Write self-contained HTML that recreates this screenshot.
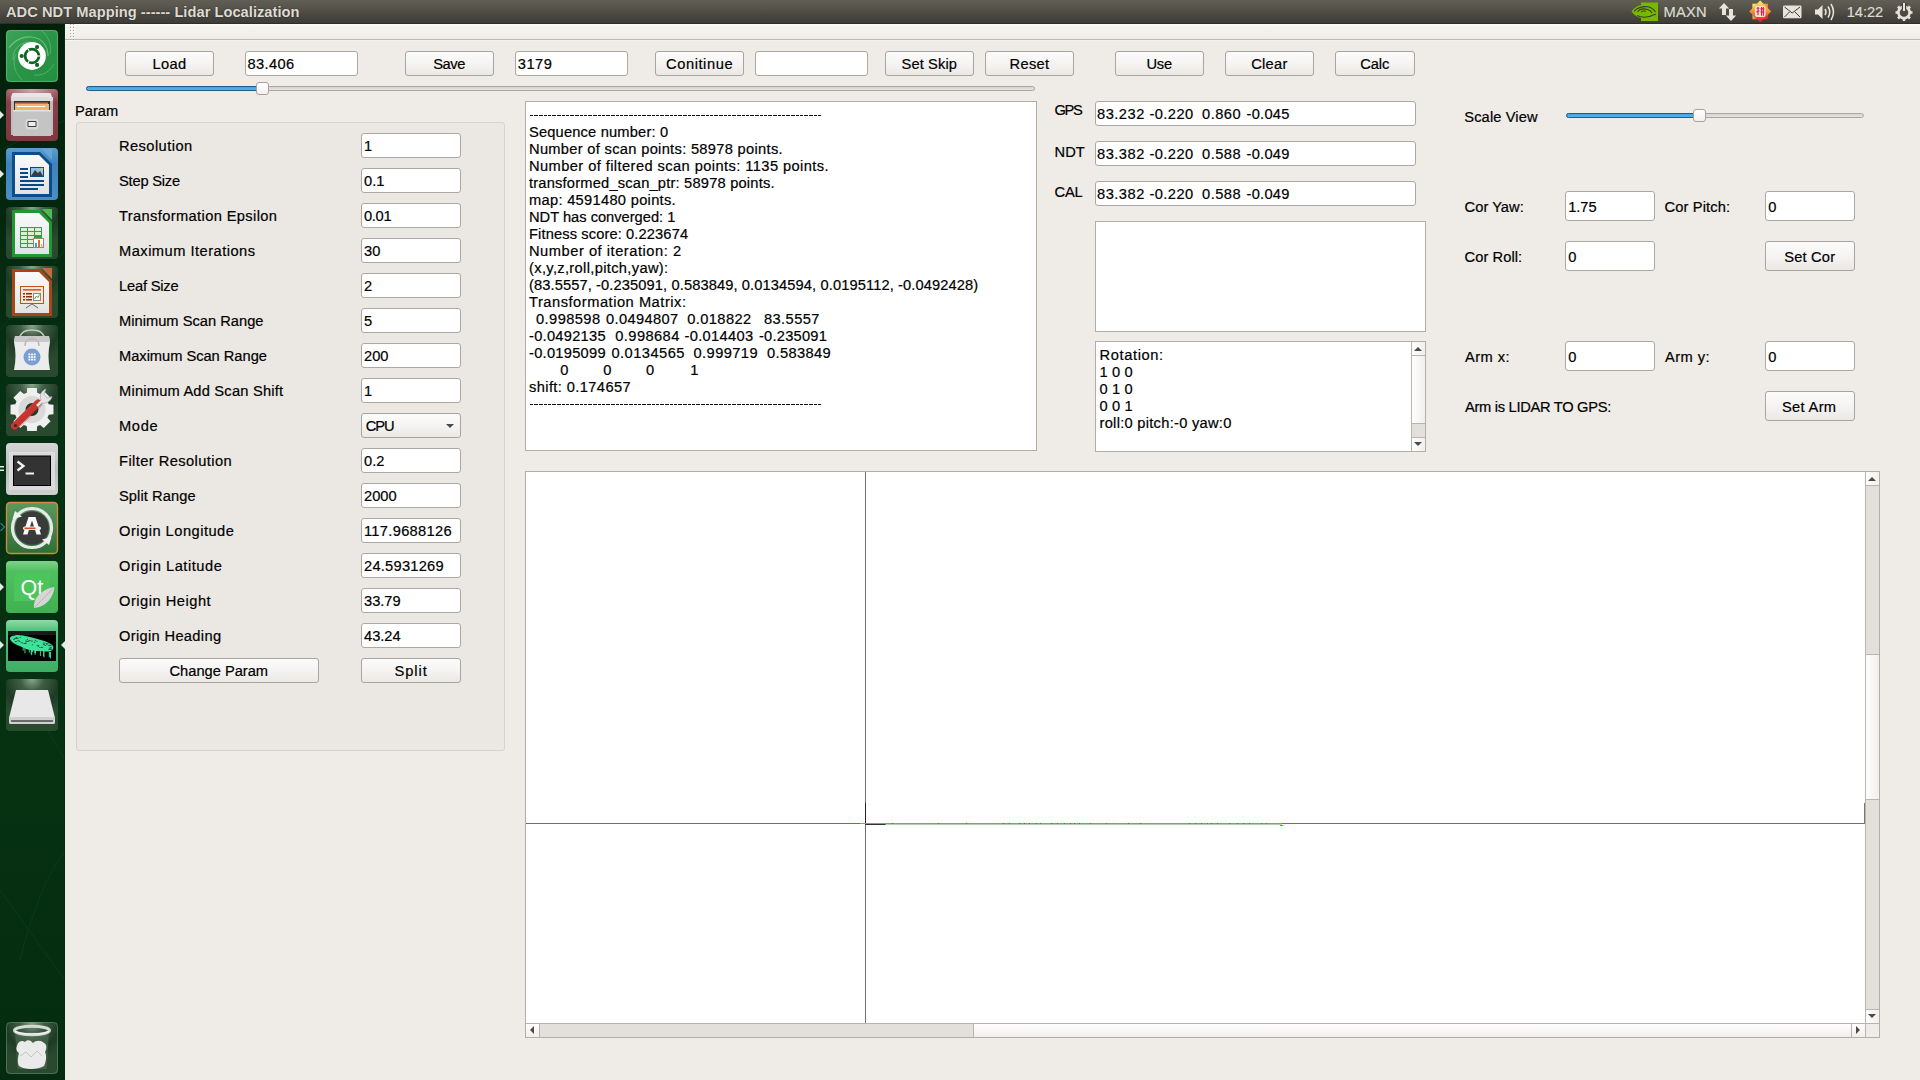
<!DOCTYPE html>
<html><head><meta charset="utf-8">
<style>
*{box-sizing:border-box}
html,body{margin:0;padding:0;width:1920px;height:1080px;overflow:hidden;background:#efebe7;font-family:"Liberation Sans",sans-serif;font-size:14.67px;color:#000}
.a{position:absolute}
.t{position:absolute;white-space:pre;line-height:17px;-webkit-text-stroke:0.2px currentColor}
.btn{position:absolute;height:26px;border:1px solid #a8a49f;border-radius:3px;background:linear-gradient(#fcfbfb,#f6f5f4 45%,#ebe8e4)}
.inp{position:absolute;height:26px;border:1px solid #aca8a3;border-radius:3px;background:#fff}
.frame{position:absolute;border:1px solid #b1ada8;background:#fff}
.sb{position:absolute;background:#e3e0dc}
.sbb{position:absolute;background:linear-gradient(90deg,#fefefe,#f1efec)}
.sbh{position:absolute;background:linear-gradient(#fefefe,#f1efec)}
.ln{position:absolute;background:#b8b4af}
.tri{position:absolute;width:0;height:0}
</style></head><body>

<!-- title / panel -->
<div class="a" style="left:0;top:0;width:1920px;height:24px;background:linear-gradient(#615f55,#57554c 30%,#48463f 65%,#3d3c37 95%,#302e2a 95.9%)"></div>
<svg class="a" style="left:1625px;top:0" width="295" height="24" viewBox="1625 0 295 24">
<!-- nvidia -->
<rect x="1641" y="2.5" width="17" height="18.5" fill="#76b900"/>
<path d="M1631.6 11.5 C1635 6 1641 4 1647 4.5 V19 C1640 19 1634.5 16 1631.6 11.5 Z" fill="#76b900"/>
<path d="M1634 11.5 C1637 7.5 1643 6 1648 6.8 C1651.5 7.5 1654 9.5 1655.5 12" stroke="#3c3b37" stroke-width="1.1" fill="none"/>
<path d="M1637.5 12 C1639.5 9 1644 8.5 1647.5 9.5 C1650 10.3 1651.5 11.5 1652 13" stroke="#3c3b37" stroke-width="1.1" fill="none"/>
<path d="M1641 12.2 C1642 10.8 1644.5 10.6 1646 11.4" stroke="#3c3b37" stroke-width="1" fill="none"/>
<path d="M1637 15.5 C1642 18 1649 17.5 1656 14" stroke="#3c3b37" stroke-width="1.1" fill="none"/>
<!-- arrows -->
<path d="M1724 3 L1718.8 8.5 H1722 V15 H1726 V8.5 H1729.2 Z" fill="#e8e4dc"/>
<path d="M1731 21 L1736.2 15.5 H1733 V9 H1729 V15.5 H1725.8 Z" fill="#e8e4dc"/>
<!-- input method -->
<defs><linearGradient id="imG" x1="0" y1="0" x2="1" y2="1"><stop offset="0" stop-color="#fff070"/><stop offset="0.45" stop-color="#f39a3a"/><stop offset="1" stop-color="#e0102a"/></linearGradient></defs>
<g transform="translate(1760.2 11.5)">
 <rect x="-7.8" y="-7.8" width="15.6" height="15.6" fill="url(#imG)"/>
 <rect x="-7.8" y="-7.8" width="15.6" height="15.6" fill="url(#imG)" transform="rotate(45)"/>
 <rect x="-5.3" y="-5.6" width="10.6" height="11" rx="2" fill="#f2e2e2"/>
 <g stroke="#e01a3a" stroke-width="1.1" fill="none">
  <path d="M-3.6 -3.2 H-0.8 M-2.2 -4.5 V3.8 M-3.8 0.6 L-0.8 -0.8"/>
  <path d="M0.2 -2.6 H4.2 M0.2 0.5 H4.2 M1.4 -4.4 V4.2 M3.2 -4.4 V4.2"/>
 </g>
</g>
<!-- mail -->
<rect x="1783" y="5.6" width="18.5" height="12.7" rx="1.2" fill="#e8e4dc"/>
<path d="M1784.5 7 L1792.2 13 L1800 7 M1784.5 17 L1789.5 12 M1800 17 L1795 12" stroke="#3c3b37" stroke-width="1" fill="none"/>
<!-- volume -->
<path d="M1815 9.5 H1818 L1822.5 5 V19 L1818 14.5 H1815 Z" fill="#e8e4dc"/>
<path d="M1825 9 Q1827 12 1825 15" stroke="#e8e4dc" stroke-width="1.5" fill="none"/>
<path d="M1828 6.5 Q1831.5 12 1828 17.5" stroke="#e8e4dc" stroke-width="1.5" fill="none"/>
<path d="M1831 4 Q1836 12 1831 20" stroke="#e8e4dc" stroke-width="1.5" fill="none"/>
<!-- gear/power -->
<g transform="translate(1904 12.5)">
 <circle r="5.6" fill="none" stroke="#e8e4dc" stroke-width="2.6"/>
 <g fill="#e8e4dc"><rect x="-1.3" y="-8.5" width="2.6" height="3"/><rect x="-1.3" y="5.5" width="2.6" height="3"/><rect x="-8.5" y="-1.3" width="3" height="2.6"/><rect x="5.5" y="-1.3" width="3" height="2.6"/>
 <rect x="-1.3" y="-8.5" width="2.6" height="3" transform="rotate(45)"/><rect x="-1.3" y="5.5" width="2.6" height="3" transform="rotate(45)"/><rect x="-8.5" y="-1.3" width="3" height="2.6" transform="rotate(45)"/><rect x="5.5" y="-1.3" width="3" height="2.6" transform="rotate(45)"/></g>
 <rect x="-2.2" y="-9.5" width="4.4" height="6" fill="#3f3e3a"/>
 <rect x="-1" y="-9.5" width="2" height="8" fill="#e8e4dc"/>
</g>
</svg>


<!-- launcher -->
<svg class="a" style="left:0;top:24px" width="65" height="1056" viewBox="0 24 65 1056">
<defs>
 <radialGradient id="hiTop" cx="0.5" cy="0" r="0.5"><stop offset="0" stop-color="#ffffff" stop-opacity="0.45"/><stop offset="1" stop-color="#ffffff" stop-opacity="0"/></radialGradient>
 <linearGradient id="lbg" x1="0" y1="0" x2="0" y2="1"><stop offset="0" stop-color="#02200a"/><stop offset="0.35" stop-color="#052f12"/><stop offset="0.7" stop-color="#063212"/><stop offset="1" stop-color="#042b0f"/></linearGradient>
 <linearGradient id="gDash" x1="0" y1="0" x2="1" y2="1"><stop offset="0" stop-color="#3da458"/><stop offset="0.5" stop-color="#2a9447"/><stop offset="1" stop-color="#239040"/></linearGradient>
 <linearGradient id="gFiles" x1="0" y1="0" x2="0" y2="1"><stop offset="0" stop-color="#a8646c"/><stop offset="0.25" stop-color="#8d3f48"/><stop offset="1" stop-color="#7e3740"/></linearGradient>
 <linearGradient id="gWriter" x1="0" y1="0" x2="0" y2="1"><stop offset="0" stop-color="#5a9fd0"/><stop offset="0.3" stop-color="#3f83bd"/><stop offset="1" stop-color="#4a8ec6"/></linearGradient>
 <radialGradient id="gDark" cx="0.5" cy="0" r="0.75"><stop offset="0" stop-color="#8aa88f"/><stop offset="0.3" stop-color="#3f5e45"/><stop offset="0.7" stop-color="#1d3b24"/><stop offset="1" stop-color="#2a4a30"/></radialGradient>
 <linearGradient id="gTerm" x1="0" y1="0" x2="0" y2="1"><stop offset="0" stop-color="#d6d6d6"/><stop offset="0.5" stop-color="#bdbdbd"/><stop offset="1" stop-color="#cfcfcf"/></linearGradient>
 <linearGradient id="gUpd" x1="0" y1="0" x2="0" y2="1"><stop offset="0" stop-color="#5a9a5e"/><stop offset="1" stop-color="#2f6e37"/></linearGradient>
 <linearGradient id="gQt" x1="0" y1="0" x2="0" y2="1"><stop offset="0" stop-color="#7ed38a"/><stop offset="0.2" stop-color="#4fbf5f"/><stop offset="1" stop-color="#40b152"/></linearGradient>
 <linearGradient id="gLid" x1="0" y1="0" x2="0" y2="1"><stop offset="0" stop-color="#8fdcaa"/><stop offset="0.2" stop-color="#52c27c"/><stop offset="1" stop-color="#3eae64"/></linearGradient>
 <linearGradient id="gPaper" x1="0" y1="0" x2="0" y2="1"><stop offset="0" stop-color="#fafafa"/><stop offset="1" stop-color="#e2e2e2"/></linearGradient>
</defs>
<rect x="0" y="24" width="65" height="1056" fill="url(#lbg)"/>
<g stroke="#12501f" stroke-width="1" fill="none" opacity="0.4">
 <path d="M0 330 L65 250"/><path d="M0 890 L65 980"/><path d="M20 960 C40 880 60 860 65 850"/><path d="M0 560 L65 520"/><path d="M0 150 L65 120"/><path d="M30 700 L65 760"/>
</g>
<rect x="64" y="24" width="1" height="1056" fill="#022a0b"/>

<!-- 1 dash -->
<rect x="6" y="30" width="52" height="52" rx="4" fill="url(#gDash)"/>
<rect x="6.5" y="30.5" width="51" height="51" rx="4" fill="none" stroke="#7cc890" stroke-width="1" opacity="0.5"/>
<path d="M9 48 C14 40 24 36 32 37 C42 38 48 46 48 56" fill="none" stroke="#b8e6c2" stroke-width="1.2" opacity="0.45"/>
<path d="M13 60 C12 48 22 42 30 42" fill="none" stroke="#b8e6c2" stroke-width="1" opacity="0.35"/>
<path d="M22 80 C14 72 12 62 16 54" fill="none" stroke="#b8e6c2" stroke-width="1" opacity="0.3"/>
<path d="M54 64 C50 72 42 76 34 75" fill="none" stroke="#b8e6c2" stroke-width="1" opacity="0.3"/>
<path d="M42 31 C50 38 52 48 50 54" fill="none" stroke="#b8e6c2" stroke-width="1" opacity="0.3"/>
<circle cx="32.3" cy="56.6" r="14" fill="#3a6a45" opacity="0.35"/>
<circle cx="32" cy="56" r="13.9" fill="#fff"/>
<circle cx="32" cy="56" r="6.9" fill="none" stroke="#0f6424" stroke-width="2.8"/>
<g stroke="#fff" stroke-width="1.1"><path d="M37 56 L40 56"/><path d="M29.5 51.7 L28 49.1"/><path d="M29.5 60.3 L28 62.9"/></g>
<circle cx="21.7" cy="56" r="2.1" fill="#0f6424"/>
<circle cx="37.1" cy="47.1" r="2.1" fill="#0f6424"/>
<circle cx="37.1" cy="64.9" r="2.1" fill="#0f6424"/>

<!-- 2 files -->
<rect x="6" y="89" width="52" height="52" rx="4" fill="url(#gFiles)"/>
<rect x="6" y="89" width="52" height="52" rx="4" fill="url(#hiTop)"/>
<rect x="11" y="97" width="42" height="38" fill="#bdbdbd"/>
<path d="M12.5 93 H50.5 L52 97 H11 Z" fill="#e6e6e6"/>
<rect x="11" y="97" width="42" height="4" fill="#dcdcdc"/>
<rect x="14" y="101" width="36" height="9" fill="#2e3236"/>
<rect x="15" y="102.5" width="33" height="3" fill="#e0703a"/>
<rect x="15" y="104" width="34" height="6" fill="#f3b465"/>
<rect x="17" y="106" width="28" height="1" fill="#fff"/>
<rect x="13" y="110" width="38" height="26" fill="#c4c4c4"/>
<rect x="13" y="110" width="38" height="1.5" fill="#e2e2e2"/>
<rect x="25.5" y="119" width="13" height="10.5" rx="2" fill="#d8d8d8"/>
<rect x="27.5" y="121" width="9" height="6" rx="1" fill="#3a3a3a"/>
<rect x="28.5" y="122" width="7" height="4" fill="#efefef"/>

<!-- 3 writer -->
<rect x="6" y="148" width="52" height="52" rx="4" fill="url(#gWriter)"/>
<path d="M12 152 H40 L52 164 V197 H12 Z" fill="#0d4e8a"/>
<path d="M15 155 H39 L49 165 V194 H15 Z" fill="url(#gPaper)"/>
<path d="M42 149 H52 V160 Z" fill="#6aa5d6"/>
<g fill="#0b4886"><rect x="20" y="168" width="8" height="2"/><rect x="20" y="172" width="8" height="2"/><rect x="20" y="176" width="8" height="2"/><rect x="20" y="180" width="24" height="2"/><rect x="20" y="184" width="24" height="2"/><rect x="20" y="188" width="18" height="2"/></g>
<rect x="30" y="167" width="14" height="10" fill="#0b4886"/>
<rect x="31" y="168" width="12" height="8" fill="#8fc3ea"/>
<path d="M31 176 L35 170 L38 173 L40 171 L43 176 Z" fill="#3b3b3b"/>
<circle cx="42" cy="169" r="1.3" fill="#e8c84a"/>

<!-- 4 calc -->
<rect x="6" y="207" width="52" height="52" rx="4" fill="url(#gDark)"/>
<path d="M12 210 H40 L52 222 V257 H12 Z" fill="#21982e"/>
<path d="M15 213 H39 L49 223 V254 H15 Z" fill="url(#gPaper)"/>
<path d="M42 209 H52 V220 Z" fill="#4cbb54"/>
<rect x="20" y="227" width="22" height="21" fill="#2ea33a"/>
<g fill="#d9f2d2"><rect x="21" y="228" width="6" height="3"/><rect x="28" y="228" width="6" height="3"/><rect x="35" y="228" width="6" height="3"/><rect x="21" y="232" width="6" height="3"/><rect x="28" y="232" width="6" height="3"/><rect x="35" y="232" width="6" height="3"/><rect x="21" y="236" width="6" height="3"/><rect x="28" y="236" width="6" height="3"/><rect x="21" y="240" width="6" height="3"/><rect x="28" y="240" width="6" height="3"/><rect x="21" y="244" width="6" height="3"/><rect x="28" y="244" width="6" height="3"/></g>
<rect x="33" y="238" width="11" height="10" fill="#8a8a8a"/>
<rect x="34" y="239" width="9" height="8" fill="#fff"/>
<rect x="35" y="243" width="2" height="4" fill="#3aa0e0"/><rect x="38" y="240" width="2" height="7" fill="#e06a2a"/><rect x="41" y="244" width="1.5" height="3" fill="#f0c030"/>

<!-- 5 impress -->
<rect x="6" y="266" width="52" height="52" rx="4" fill="url(#gDark)"/>
<path d="M12 269 H40 L52 281 V316 H12 Z" fill="#a8461a"/>
<path d="M15 272 H39 L49 282 V313 H15 Z" fill="url(#gPaper)"/>
<path d="M42 268 H52 V279 Z" fill="#c56a3a"/>
<rect x="20" y="286" width="24" height="18" fill="#c4501e"/>
<rect x="21" y="287" width="22" height="16" fill="#fbe6da"/>
<rect x="23" y="289" width="18" height="1.6" fill="#d0602a"/>
<g fill="#8a2e0e"><rect x="23" y="293" width="2" height="1.5"/><rect x="26" y="293" width="6" height="1.5"/><rect x="23" y="296" width="2" height="1.5"/><rect x="26" y="296" width="6" height="1.5"/><rect x="23" y="299" width="2" height="1.5"/><rect x="26" y="299" width="6" height="1.5"/></g>
<rect x="33" y="293" width="8" height="8" fill="#888"/><rect x="34" y="294" width="6" height="6" fill="#fff"/>
<path d="M34.5 299 L36.5 296 L38 297.5 L39.5 294.5" stroke="#2aa82a" stroke-width="0.9" fill="none"/>
<path d="M26 308 L32 304 L38 308" stroke="#666" stroke-width="1" fill="none"/>

<!-- 6 software -->
<rect x="6" y="325" width="52" height="52" rx="4" fill="url(#gDark)"/>
<path d="M19 342 C19 332 25 330 32 330 C39 330 45 332 45 342" stroke="#c8c8c8" stroke-width="1.5" fill="none"/>
<path d="M15 336 H49 L50 342 C48 352 48 360 50 370 H14 C16 360 16 352 14 342 Z" fill="#ececec"/>
<path d="M15 336 H49 L50 342 H14 Z" fill="#c9c9c9"/>
<path d="M25 346 C25 340 28 339 32 339 C36 339 39 340 39 346" stroke="#b8b8b8" stroke-width="1.4" fill="none"/>
<circle cx="32" cy="357" r="8.5" fill="#7b9fd2"/>
<g fill="#fff"><rect x="28.5" y="353.5" width="1.8" height="1.8"/><rect x="31.1" y="353.5" width="1.8" height="1.8"/><rect x="33.7" y="353.5" width="1.8" height="1.8"/><rect x="28.5" y="356.1" width="1.8" height="1.8"/><rect x="31.1" y="356.1" width="1.8" height="1.8"/><rect x="33.7" y="356.1" width="1.8" height="1.8"/><rect x="28.5" y="358.7" width="1.8" height="1.8"/><rect x="31.1" y="358.7" width="1.8" height="1.8"/><rect x="33.7" y="358.7" width="1.8" height="1.8"/></g>

<!-- 7 settings -->
<rect x="6" y="384" width="52" height="52" rx="4" fill="url(#gDark)"/>
<path d="M48.72 404.33 L53.47 404.70 L53.47 414.30 L48.72 414.67 L47.48 417.66 L50.58 421.29 L43.79 428.08 L40.16 424.98 L37.17 426.22 L36.80 430.97 L27.20 430.97 L26.83 426.22 L23.84 424.98 L20.21 428.08 L13.42 421.29 L16.52 417.66 L15.28 414.67 L10.53 414.30 L10.53 404.70 L15.28 404.33 L16.52 401.34 L13.42 397.71 L20.21 390.92 L23.84 394.02 L26.83 392.78 L27.20 388.03 L36.80 388.03 L37.17 392.78 L40.16 394.02 L43.79 390.92 L50.58 397.71 L47.48 401.34 Z" fill="#efefef"/>
<circle cx="32" cy="409.5" r="13.5" fill="#d9d9d9"/>
<circle cx="32" cy="409.5" r="6.5" fill="#1f3a26"/>
<path d="M14.5 426 L38 403" stroke="#d23a32" stroke-width="7" stroke-linecap="round"/>
<path d="M14.5 426 L38 403" stroke="#a82620" stroke-width="7" stroke-linecap="round" opacity="0.25" transform="translate(1 1)"/>
<circle cx="15.5" cy="425.5" r="1.6" fill="#3a2a2a"/>
<path d="M36 405 L41 400 C39 395 42 390 46 389 L44 394 L47 398 L52 396.5 C51 401 47 404 42 403 L38 407 Z" fill="#e4e4e4" stroke="#9a9a9a" stroke-width="0.6"/>

<!-- 8 terminal -->
<rect x="6" y="443" width="52" height="52" rx="4" fill="url(#gTerm)"/>
<rect x="9.5" y="452.5" width="45" height="37.5" fill="#f2f2f2"/>
<rect x="10" y="453" width="44" height="37" fill="#b0b0b0" opacity="0.35"/>
<rect x="13" y="455.5" width="38" height="30.5" fill="#000"/>
<rect x="14" y="456.5" width="36" height="28.5" fill="#333"/>
<path d="M17.5 461.5 L23.5 466 L17.5 470.5" stroke="#f4f4f4" stroke-width="2.2" fill="none"/>
<rect x="25.5" y="472.5" width="8.5" height="2" fill="#f4f4f4"/>

<!-- 9 updater -->
<rect x="6" y="502" width="52" height="52" rx="4" fill="url(#gUpd)"/>
<rect x="6.5" y="502.5" width="51" height="51" rx="4" fill="none" stroke="#d9893c" stroke-width="1.3"/>
<circle cx="32" cy="528" r="19.5" fill="none" stroke="#e8e8e8" stroke-width="3.2"/>
<circle cx="32" cy="528" r="16.8" fill="#3a3a3a"/>
<path d="M12.5 519 L15 511 L22 516.5 Z" fill="#f0f0f0"/>
<path d="M51.5 537 L49 545 L42 539.5 Z" fill="#f0f0f0"/>
<path d="M23 534.5 L28.5 517 H35.5 L41 534.5 H36.5 L32 520.5 L27.5 534.5 Z" fill="#fafafa"/>
<rect x="23" y="526.5" width="18" height="3.6" rx="1.8" fill="#f4f4f4"/>
<rect x="24.5" y="527.5" width="11" height="1.6" fill="#e24a1c"/>

<!-- 10 qt -->
<rect x="6" y="561" width="52" height="52" rx="4" fill="url(#gQt)"/>
<path d="M18 573 H50 V601 H14 V577 Z" fill="#4cc65c"/>
<text x="20.5" y="595" font-family="Liberation Sans" font-size="21.5" fill="#fff">Qt</text>
<path d="M34 608 C33 598 42 589 54.5 587 C53 598 46 607 34 608 Z" fill="#d6d6d6"/>
<path d="M35 607 L53 588.5" stroke="#a0a0a0" stroke-width="0.6"/>

<!-- 11 lidar app -->
<rect x="6" y="620" width="52" height="52" rx="4" fill="url(#gLid)"/>
<rect x="8" y="631" width="48" height="30" fill="#000"/>
<rect x="8" y="631" width="48" height="4" fill="#333" opacity="0.5"/>
<path d="M10 638 C12 634 20 634.5 30 637 C40 639.5 50 642 53 646 C54.5 649.5 51 652 46 651.5 C38 651 30 651 24 648 C17 645 9.5 642 10 638 Z" fill="#3ee39a"/>
<g fill="#000" opacity="0.7">
<rect x="36.7" y="645.1" width="2.6" height="0.7"/>
<rect x="48.8" y="647.9" width="2.8" height="0.7"/>
<rect x="14.1" y="638.1" width="2.9" height="0.7"/>
<rect x="37.7" y="646.2" width="1.2" height="0.7"/>
<rect x="30.8" y="640.7" width="2.1" height="0.7"/>
<rect x="34.8" y="640.2" width="1.4" height="0.7"/>
<rect x="23.6" y="643.0" width="2.5" height="0.7"/>
<rect x="19.1" y="641.2" width="1.3" height="0.7"/>
<rect x="36.5" y="641.3" width="1.0" height="0.7"/>
<rect x="46.1" y="644.1" width="1.4" height="0.7"/>
<rect x="50.3" y="649.1" width="1.6" height="0.7"/>
<rect x="49.5" y="646.9" width="2.4" height="0.7"/>
<rect x="20.8" y="642.5" width="2.4" height="0.7"/>
<rect x="49.7" y="649.1" width="1.6" height="0.7"/>
<rect x="26.7" y="639.2" width="1.3" height="0.7"/>
<rect x="15.5" y="637.4" width="2.2" height="0.7"/>
<rect x="13.1" y="639.1" width="1.7" height="0.7"/>
<rect x="24.8" y="642.7" width="2.0" height="0.7"/>
<rect x="25.0" y="640.7" width="2.4" height="0.7"/>
<rect x="15.2" y="641.4" width="1.0" height="0.7"/>
<rect x="41.5" y="646.8" width="1.0" height="0.7"/>
<rect x="42.9" y="644.3" width="2.2" height="0.7"/>
<rect x="13.3" y="635.4" width="1.4" height="0.7"/>
<rect x="49.3" y="644.8" width="2.5" height="0.7"/>
<rect x="48.3" y="649.0" width="1.7" height="0.7"/>
<rect x="26.5" y="641.3" width="2.6" height="0.7"/>
<rect x="17.1" y="640.5" width="2.6" height="0.7"/>
<rect x="45.7" y="643.0" width="2.9" height="0.7"/>
<rect x="16.5" y="637.9" width="2.2" height="0.7"/>
<rect x="47.9" y="645.3" width="2.8" height="0.7"/>
<rect x="33.7" y="641.8" width="1.6" height="0.7"/>
<rect x="19.7" y="637.1" width="1.3" height="0.7"/>
<rect x="39.2" y="647.2" width="1.3" height="0.7"/>
<rect x="14.8" y="641.4" width="2.1" height="0.7"/>
<rect x="28.4" y="640.1" width="2.2" height="0.7"/>
<rect x="44.4" y="645.2" width="1.8" height="0.7"/>
<rect x="15.1" y="641.0" width="1.1" height="0.7"/>
<rect x="31.8" y="644.5" width="1.3" height="0.7"/>
<rect x="40.8" y="647.3" width="2.3" height="0.7"/>
<rect x="42.9" y="642.7" width="1.9" height="0.7"/>
</g>
<g fill="#3ee39a">
<rect x="24.5" y="646.9" width="0.9" height="6.4"/>
<rect x="28.8" y="647.8" width="0.9" height="4.8"/>
<rect x="50.0" y="652.0" width="0.9" height="6.4"/>
<rect x="49.3" y="651.9" width="0.9" height="4.8"/>
<rect x="34.6" y="648.9" width="0.9" height="5.9"/>
<rect x="34.4" y="648.9" width="0.9" height="4.2"/>
<rect x="32.1" y="648.4" width="0.9" height="3.6"/>
<rect x="31.3" y="648.3" width="0.9" height="7.0"/>
<rect x="48.8" y="651.8" width="0.9" height="5.5"/>
<rect x="35.0" y="649.0" width="0.9" height="4.4"/>
<rect x="22.7" y="646.5" width="0.9" height="4.1"/>
<rect x="43.5" y="650.7" width="0.9" height="6.5"/>
<rect x="30.8" y="648.2" width="0.9" height="6.1"/>
<rect x="43.2" y="650.6" width="0.9" height="5.8"/>
<rect x="39.9" y="650.0" width="0.9" height="6.0"/>
<rect x="30.9" y="648.2" width="0.9" height="5.8"/>
</g>

<!-- 12 drive -->
<rect x="6" y="679" width="52" height="52" rx="4" fill="url(#gDark)"/>
<path d="M16 690 H48 L55 718 H9 Z" fill="#e8e8e8"/>
<rect x="9" y="717" width="46" height="7" rx="1.5" fill="#cfcfcf"/>
<rect x="11" y="720" width="42" height="2" fill="#6a6a6a"/>

<!-- trash -->
<rect x="6" y="1022" width="52" height="52" rx="4" fill="url(#gDark)"/>
<rect x="6.5" y="1022.5" width="51" height="51" rx="4" fill="none" stroke="#7a9a80" stroke-width="1" opacity="0.45"/>
<path d="M15 1032 H49 L46.5 1069 H17.5 Z" fill="#6f8a74" opacity="0.35"/>
<path d="M17 1046 C18 1041 22 1040 25 1042 C27 1039 31 1040 33 1043 C36 1040 41 1040 44 1043 C47 1044 47 1049 45 1052 C47 1056 46 1062 44 1066 C38 1070 24 1070 19 1066 C17 1062 18 1057 19 1053 C16 1051 16 1048 17 1046 Z" fill="#eaeaea"/>
<path d="M20 1056 L26 1052 L31 1057 L37 1051 L42 1056" stroke="#c4c4c4" stroke-width="1" fill="none"/>
<ellipse cx="32" cy="1030.5" rx="17.5" ry="4.2" fill="none" stroke="#d8d8d8" stroke-width="3"/>
<path d="M15 1031 C20 1035 44 1035 49 1031" stroke="#f4f4f4" stroke-width="1.2" fill="none"/>

<!-- running indicators -->
<g fill="#e8e8e8">
 <path d="M0 111 L4 115 L0 119 Z"/>
 <path d="M0 170 L4 174 L0 178 Z"/>
 <path d="M0 466 H4 V467.5 H0 Z"/><path d="M0 469.5 H4 V471 H0 Z"/>
 <path d="M0 583 L4 587 L0 591 Z"/>
 <path d="M0 641 L4 645 L0 649 Z"/>
 <path d="M65 641 L61 645 L65 649 Z"/>
</g>
<path d="M0.5 523 L4.5 527 L0.5 531" fill="none" stroke="#4aa8e0" stroke-width="1"/>
</svg>


<!-- toolbar strip -->
<div class="a" style="left:65px;top:24px;width:1855px;height:16px;background:linear-gradient(#fdfcfa,#f6f4f0 15%,#f0ede9);border-bottom:1px solid #bdb9b3"></div>
<div class="a" style="left:65px;top:40px;width:1855px;height:1px;background:#f5f2ee"></div>
<svg class="a" style="left:69px;top:24px" width="8" height="18"><rect x="1" y="0" width="1" height="1" fill="#aaa6a0"/><rect x="2" y="1" width="1" height="1" fill="#fff"/><rect x="4" y="0" width="1" height="1" fill="#aaa6a0"/><rect x="5" y="1" width="1" height="1" fill="#fff"/><rect x="1" y="3" width="1" height="1" fill="#aaa6a0"/><rect x="2" y="4" width="1" height="1" fill="#fff"/><rect x="4" y="3" width="1" height="1" fill="#aaa6a0"/><rect x="5" y="4" width="1" height="1" fill="#fff"/><rect x="1" y="6" width="1" height="1" fill="#aaa6a0"/><rect x="2" y="7" width="1" height="1" fill="#fff"/><rect x="4" y="6" width="1" height="1" fill="#aaa6a0"/><rect x="5" y="7" width="1" height="1" fill="#fff"/><rect x="1" y="9" width="1" height="1" fill="#aaa6a0"/><rect x="2" y="10" width="1" height="1" fill="#fff"/><rect x="4" y="9" width="1" height="1" fill="#aaa6a0"/><rect x="5" y="10" width="1" height="1" fill="#fff"/><rect x="1" y="12" width="1" height="1" fill="#aaa6a0"/><rect x="2" y="13" width="1" height="1" fill="#fff"/><rect x="4" y="12" width="1" height="1" fill="#aaa6a0"/><rect x="5" y="13" width="1" height="1" fill="#fff"/><rect x="1" y="15" width="1" height="1" fill="#aaa6a0"/><rect x="2" y="16" width="1" height="1" fill="#fff"/><rect x="4" y="15" width="1" height="1" fill="#aaa6a0"/><rect x="5" y="16" width="1" height="1" fill="#fff"/></svg>

<!-- top button row -->
<div class="btn" style="left:125px;top:51px;width:89px;height:25px"></div>
<div class="inp" style="left:245px;top:51px;width:113px;height:25px"></div>
<div class="btn" style="left:405px;top:51px;width:89px;height:25px"></div>
<div class="inp" style="left:515px;top:51px;width:113px;height:25px"></div>
<div class="btn" style="left:655px;top:51px;width:89px;height:25px"></div>
<div class="inp" style="left:755px;top:51px;width:113px;height:25px"></div>
<div class="btn" style="left:885px;top:51px;width:89px;height:25px"></div>
<div class="btn" style="left:985px;top:51px;width:89px;height:25px"></div>
<div class="btn" style="left:1115px;top:51px;width:89px;height:25px"></div>
<div class="btn" style="left:1225px;top:51px;width:89px;height:25px"></div>
<div class="btn" style="left:1335px;top:51px;width:80px;height:25px"></div>

<!-- slider -->
<div class="a" style="left:86px;top:86px;width:949px;height:5px;border:1px solid #aaa6a1;border-radius:3px;background:linear-gradient(#d8d5d1,#e4e1de)"></div>
<div class="a" style="left:86px;top:86px;width:174px;height:5px;border:1px solid #1d5e8c;border-radius:3px 0 0 3px;background:linear-gradient(#47a2dc,#52b3f0)"></div>
<div class="a" style="left:256px;top:82px;width:13px;height:13px;border:1px solid #a6a29d;border-radius:3px;background:linear-gradient(#fff,#f3f1ef)"></div>

<!-- Param group -->
<div class="a" style="left:76px;top:122px;width:429px;height:629px;border:1px solid #d6d2cd;border-radius:3px;background:#ebe8e3"></div>
<div class="inp" style="left:361px;top:133px;width:100px;height:25px"></div>
<div class="inp" style="left:361px;top:168px;width:100px;height:25px"></div>
<div class="inp" style="left:361px;top:203px;width:100px;height:25px"></div>
<div class="inp" style="left:361px;top:238px;width:100px;height:25px"></div>
<div class="inp" style="left:361px;top:273px;width:100px;height:25px"></div>
<div class="inp" style="left:361px;top:308px;width:100px;height:25px"></div>
<div class="inp" style="left:361px;top:343px;width:100px;height:25px"></div>
<div class="inp" style="left:361px;top:378px;width:100px;height:25px"></div>
<div class="btn" style="left:361px;top:413px;width:100px;height:25px"></div>
<div class="tri" style="left:446px;top:424px;border-left:4px solid transparent;border-right:4px solid transparent;border-top:4px solid #4a4a4a"></div>
<div class="inp" style="left:361px;top:448px;width:100px;height:25px"></div>
<div class="inp" style="left:361px;top:483px;width:100px;height:25px"></div>
<div class="inp" style="left:361px;top:518px;width:100px;height:25px"></div>
<div class="inp" style="left:361px;top:553px;width:100px;height:25px"></div>
<div class="inp" style="left:361px;top:588px;width:100px;height:25px"></div>
<div class="inp" style="left:361px;top:623px;width:100px;height:25px"></div>
<div class="btn" style="left:119px;top:658px;width:200px;height:25px"></div>
<div class="btn" style="left:361px;top:658px;width:100px;height:25px"></div>

<!-- text log -->
<div class="frame" style="left:525px;top:101px;width:512px;height:350px"></div>
<svg class="a" style="left:530px;top:115px" width="295" height="1" fill="#111"><rect x="0" y="0" width="3" height="1"/><rect x="4" y="0" width="4" height="1"/><rect x="9" y="0" width="4" height="1"/><rect x="14" y="0" width="3" height="1"/><rect x="18" y="0" width="3" height="1"/><rect x="22" y="0" width="4" height="1"/><rect x="27" y="0" width="4" height="1"/><rect x="32" y="0" width="3" height="1"/><rect x="36" y="0" width="3" height="1"/><rect x="40" y="0" width="4" height="1"/><rect x="45" y="0" width="4" height="1"/><rect x="50" y="0" width="3" height="1"/><rect x="54" y="0" width="3" height="1"/><rect x="58" y="0" width="4" height="1"/><rect x="63" y="0" width="4" height="1"/><rect x="68" y="0" width="3" height="1"/><rect x="72" y="0" width="3" height="1"/><rect x="76" y="0" width="4" height="1"/><rect x="81" y="0" width="4" height="1"/><rect x="86" y="0" width="3" height="1"/><rect x="90" y="0" width="3" height="1"/><rect x="94" y="0" width="4" height="1"/><rect x="99" y="0" width="4" height="1"/><rect x="104" y="0" width="3" height="1"/><rect x="108" y="0" width="3" height="1"/><rect x="112" y="0" width="4" height="1"/><rect x="117" y="0" width="4" height="1"/><rect x="122" y="0" width="3" height="1"/><rect x="126" y="0" width="3" height="1"/><rect x="130" y="0" width="4" height="1"/><rect x="135" y="0" width="4" height="1"/><rect x="140" y="0" width="3" height="1"/><rect x="144" y="0" width="3" height="1"/><rect x="148" y="0" width="4" height="1"/><rect x="153" y="0" width="4" height="1"/><rect x="158" y="0" width="3" height="1"/><rect x="162" y="0" width="3" height="1"/><rect x="166" y="0" width="4" height="1"/><rect x="171" y="0" width="4" height="1"/><rect x="176" y="0" width="3" height="1"/><rect x="180" y="0" width="3" height="1"/><rect x="184" y="0" width="4" height="1"/><rect x="189" y="0" width="4" height="1"/><rect x="194" y="0" width="3" height="1"/><rect x="198" y="0" width="3" height="1"/><rect x="202" y="0" width="4" height="1"/><rect x="207" y="0" width="4" height="1"/><rect x="212" y="0" width="3" height="1"/><rect x="216" y="0" width="3" height="1"/><rect x="220" y="0" width="4" height="1"/><rect x="225" y="0" width="4" height="1"/><rect x="230" y="0" width="3" height="1"/><rect x="234" y="0" width="3" height="1"/><rect x="238" y="0" width="4" height="1"/><rect x="243" y="0" width="4" height="1"/><rect x="248" y="0" width="3" height="1"/><rect x="252" y="0" width="3" height="1"/><rect x="256" y="0" width="4" height="1"/><rect x="261" y="0" width="4" height="1"/><rect x="266" y="0" width="3" height="1"/><rect x="270" y="0" width="3" height="1"/><rect x="274" y="0" width="4" height="1"/><rect x="279" y="0" width="4" height="1"/><rect x="284" y="0" width="3" height="1"/><rect x="288" y="0" width="3" height="1"/></svg>
<svg class="a" style="left:530px;top:404px" width="295" height="1" fill="#111"><rect x="0" y="0" width="3" height="1"/><rect x="4" y="0" width="4" height="1"/><rect x="9" y="0" width="4" height="1"/><rect x="14" y="0" width="3" height="1"/><rect x="18" y="0" width="3" height="1"/><rect x="22" y="0" width="4" height="1"/><rect x="27" y="0" width="4" height="1"/><rect x="32" y="0" width="3" height="1"/><rect x="36" y="0" width="3" height="1"/><rect x="40" y="0" width="4" height="1"/><rect x="45" y="0" width="4" height="1"/><rect x="50" y="0" width="3" height="1"/><rect x="54" y="0" width="3" height="1"/><rect x="58" y="0" width="4" height="1"/><rect x="63" y="0" width="4" height="1"/><rect x="68" y="0" width="3" height="1"/><rect x="72" y="0" width="3" height="1"/><rect x="76" y="0" width="4" height="1"/><rect x="81" y="0" width="4" height="1"/><rect x="86" y="0" width="3" height="1"/><rect x="90" y="0" width="3" height="1"/><rect x="94" y="0" width="4" height="1"/><rect x="99" y="0" width="4" height="1"/><rect x="104" y="0" width="3" height="1"/><rect x="108" y="0" width="3" height="1"/><rect x="112" y="0" width="4" height="1"/><rect x="117" y="0" width="4" height="1"/><rect x="122" y="0" width="3" height="1"/><rect x="126" y="0" width="3" height="1"/><rect x="130" y="0" width="4" height="1"/><rect x="135" y="0" width="4" height="1"/><rect x="140" y="0" width="3" height="1"/><rect x="144" y="0" width="3" height="1"/><rect x="148" y="0" width="4" height="1"/><rect x="153" y="0" width="4" height="1"/><rect x="158" y="0" width="3" height="1"/><rect x="162" y="0" width="3" height="1"/><rect x="166" y="0" width="4" height="1"/><rect x="171" y="0" width="4" height="1"/><rect x="176" y="0" width="3" height="1"/><rect x="180" y="0" width="3" height="1"/><rect x="184" y="0" width="4" height="1"/><rect x="189" y="0" width="4" height="1"/><rect x="194" y="0" width="3" height="1"/><rect x="198" y="0" width="3" height="1"/><rect x="202" y="0" width="4" height="1"/><rect x="207" y="0" width="4" height="1"/><rect x="212" y="0" width="3" height="1"/><rect x="216" y="0" width="3" height="1"/><rect x="220" y="0" width="4" height="1"/><rect x="225" y="0" width="4" height="1"/><rect x="230" y="0" width="3" height="1"/><rect x="234" y="0" width="3" height="1"/><rect x="238" y="0" width="4" height="1"/><rect x="243" y="0" width="4" height="1"/><rect x="248" y="0" width="3" height="1"/><rect x="252" y="0" width="3" height="1"/><rect x="256" y="0" width="4" height="1"/><rect x="261" y="0" width="4" height="1"/><rect x="266" y="0" width="3" height="1"/><rect x="270" y="0" width="3" height="1"/><rect x="274" y="0" width="4" height="1"/><rect x="279" y="0" width="4" height="1"/><rect x="284" y="0" width="3" height="1"/><rect x="288" y="0" width="3" height="1"/></svg>

<!-- GPS etc -->
<div class="inp" style="left:1095px;top:101px;width:321px;height:25px"></div>
<div class="inp" style="left:1095px;top:141px;width:321px;height:25px"></div>
<div class="inp" style="left:1095px;top:181px;width:321px;height:25px"></div>
<div class="frame" style="left:1095px;top:221px;width:331px;height:111px"></div>
<div class="frame" style="left:1095px;top:341px;width:331px;height:111px"></div>
<!-- rotation scrollbar -->
<div class="ln" style="left:1411px;top:342px;width:1px;height:109px"></div>
<div class="sbb" style="left:1412px;top:342px;width:13px;height:13px"></div>
<div class="ln" style="left:1412px;top:355px;width:13px;height:1px"></div>
<div class="sbb" style="left:1412px;top:356px;width:13px;height:67px"></div>
<div class="ln" style="left:1412px;top:423px;width:13px;height:1px"></div>
<div class="sb" style="left:1412px;top:424px;width:13px;height:13px"></div>
<div class="ln" style="left:1412px;top:437px;width:13px;height:1px"></div>
<div class="sbb" style="left:1412px;top:438px;width:13px;height:13px"></div>
<div class="tri" style="left:1414px;top:347px;border-left:4px solid transparent;border-right:4px solid transparent;border-bottom:4px solid #4a4a4a"></div>
<div class="tri" style="left:1414px;top:442px;border-left:4px solid transparent;border-right:4px solid transparent;border-top:4px solid #4a4a4a"></div>

<!-- right panel -->
<div class="a" style="left:1566px;top:113px;width:298px;height:5px;border:1px solid #aaa6a1;border-radius:3px;background:linear-gradient(#d8d5d1,#e4e1de)"></div>
<div class="a" style="left:1566px;top:113px;width:130px;height:5px;border:1px solid #1d5e8c;border-radius:3px 0 0 3px;background:linear-gradient(#47a2dc,#52b3f0)"></div>
<div class="a" style="left:1693px;top:109px;width:13px;height:13px;border:1px solid #a6a29d;border-radius:3px;background:linear-gradient(#fff,#f3f1ef)"></div>
<div class="inp" style="left:1565px;top:191px;width:90px;height:30px"></div>
<div class="inp" style="left:1765px;top:191px;width:90px;height:30px"></div>
<div class="inp" style="left:1565px;top:241px;width:90px;height:30px"></div>
<div class="btn" style="left:1765px;top:241px;width:90px;height:30px"></div>
<div class="inp" style="left:1565px;top:341px;width:90px;height:30px"></div>
<div class="inp" style="left:1765px;top:341px;width:90px;height:30px"></div>
<div class="btn" style="left:1765px;top:391px;width:90px;height:30px"></div>

<!-- graphics view -->
<div class="frame" style="left:525px;top:471px;width:1355px;height:567px"></div>
<!-- axes -->
<div class="a" style="left:865px;top:472px;width:1px;height:551px;background:#6f6f6f"></div>
<div class="a" style="left:526px;top:823px;width:1339px;height:1px;background:#6f6f6f"></div>
<div class="a" style="left:865px;top:803px;width:1px;height:20px;background:#222"></div>
<div class="a" style="left:865px;top:824px;width:21px;height:1px;background:#333"></div>
<div class="a" style="left:1864px;top:803px;width:1px;height:21px;background:#777"></div>
<svg class="a" style="left:860px;top:823px" width="425" height="3"><rect x="0" y="0" width="422" height="1" fill="#10f010"/><rect x="25" y="1" width="397" height="1" fill="#78b878" opacity="0.6"/><rect x="32" y="0" width="1" height="1" fill="#ff2020"/><rect x="78" y="0" width="1" height="1" fill="#ff2020"/><rect x="106" y="0" width="1" height="1" fill="#ff2020"/><rect x="143" y="0" width="1" height="1" fill="#ff2020"/><rect x="149" y="0" width="1" height="1" fill="#ff2020"/><rect x="159" y="0" width="1" height="1" fill="#ff2020"/><rect x="164" y="0" width="1" height="1" fill="#ff2020"/><rect x="169" y="0" width="1" height="1" fill="#ff2020"/><rect x="176" y="0" width="1" height="1" fill="#ff2020"/><rect x="180" y="0" width="1" height="1" fill="#ff2020"/><rect x="191" y="0" width="1" height="1" fill="#ff2020"/><rect x="197" y="0" width="1" height="1" fill="#ff2020"/><rect x="204" y="0" width="1" height="1" fill="#ff2020"/><rect x="210" y="0" width="1" height="1" fill="#ff2020"/><rect x="214" y="0" width="1" height="1" fill="#ff2020"/><rect x="219" y="0" width="1" height="1" fill="#ff2020"/><rect x="230" y="0" width="1" height="1" fill="#ff2020"/><rect x="246" y="0" width="1" height="1" fill="#ff2020"/><rect x="268" y="0" width="1" height="1" fill="#ff2020"/><rect x="280" y="0" width="1" height="1" fill="#ff2020"/><rect x="329" y="0" width="1" height="1" fill="#ff2020"/><rect x="335" y="0" width="1" height="1" fill="#ff2020"/><rect x="341" y="0" width="1" height="1" fill="#ff2020"/><rect x="347" y="0" width="1" height="1" fill="#ff2020"/><rect x="351" y="0" width="1" height="1" fill="#ff2020"/><rect x="357" y="0" width="1" height="1" fill="#ff2020"/><rect x="369" y="0" width="1" height="1" fill="#ff2020"/><rect x="377" y="0" width="1" height="1" fill="#ff2020"/><rect x="383" y="0" width="1" height="1" fill="#ff2020"/><rect x="389" y="0" width="1" height="1" fill="#ff2020"/><rect x="401" y="0" width="1" height="1" fill="#ff2020"/><rect x="406" y="0" width="1" height="1" fill="#ff2020"/><rect x="420" y="2" width="3" height="1" fill="#00e000"/></svg>

<!-- v scrollbar -->
<div class="ln" style="left:1865px;top:472px;width:1px;height:551px"></div>
<div class="sbb" style="left:1866px;top:472px;width:13px;height:13px"></div>
<div class="ln" style="left:1866px;top:485px;width:13px;height:1px"></div>
<div class="sb" style="left:1866px;top:486px;width:13px;height:168px"></div>
<div class="ln" style="left:1866px;top:654px;width:13px;height:1px"></div>
<div class="sbb" style="left:1866px;top:655px;width:13px;height:144px"></div>
<div class="ln" style="left:1866px;top:799px;width:13px;height:1px"></div>
<div class="sb" style="left:1866px;top:800px;width:13px;height:209px"></div>
<div class="ln" style="left:1866px;top:1009px;width:13px;height:1px"></div>
<div class="sbb" style="left:1866px;top:1010px;width:13px;height:13px"></div>
<div class="tri" style="left:1868px;top:477px;border-left:4px solid transparent;border-right:4px solid transparent;border-bottom:4px solid #4a4a4a"></div>
<div class="tri" style="left:1868px;top:1014px;border-left:4px solid transparent;border-right:4px solid transparent;border-top:4px solid #4a4a4a"></div>
<!-- h scrollbar -->
<div class="ln" style="left:526px;top:1023px;width:1353px;height:1px"></div>
<div class="sbh" style="left:526px;top:1024px;width:13px;height:13px"></div>
<div class="ln" style="left:539px;top:1024px;width:1px;height:13px"></div>
<div class="sb" style="left:540px;top:1024px;width:433px;height:13px"></div>
<div class="ln" style="left:973px;top:1024px;width:1px;height:13px"></div>
<div class="sbh" style="left:974px;top:1024px;width:877px;height:13px"></div>
<div class="ln" style="left:1851px;top:1024px;width:1px;height:13px"></div>
<div class="sbh" style="left:1852px;top:1024px;width:13px;height:13px"></div>
<div class="ln" style="left:1865px;top:1024px;width:1px;height:13px"></div>
<div class="a" style="left:1866px;top:1024px;width:13px;height:13px;background:#efebe7"></div>
<div class="tri" style="left:530px;top:1026px;border-top:4px solid transparent;border-bottom:4px solid transparent;border-right:4px solid #4a4a4a"></div>
<div class="tri" style="left:1856px;top:1026px;border-top:4px solid transparent;border-bottom:4px solid transparent;border-left:4px solid #4a4a4a"></div>

<div class="t" style="left:6px;top:4px;letter-spacing:0.03px;font-weight:bold;-webkit-text-stroke:0;text-shadow:0 0 1.5px rgba(0,0,0,0.55);color:#dfdbd2">ADC NDT Mapping ------ Lidar Localization</div>
<div class="t" style="left:1663.4px;top:4px;letter-spacing:0.29px;color:#dfdbd2">MAXN</div>
<div class="t" style="left:1846.8px;top:4px;letter-spacing:-0.09px;color:#dfdbd2">14:22</div>
<div class="t" style="left:247.5px;top:56px;letter-spacing:0.35px">83.406</div>
<div class="t" style="left:517.75px;top:56px;letter-spacing:0.5px">3179</div>
<div class="t" style="left:75px;top:103px;letter-spacing:-0.02px">Param</div>
<div class="t" style="left:119px;top:138px;letter-spacing:0.43px">Resolution</div>
<div class="t" style="left:364px;top:138px">1</div>
<div class="t" style="left:119px;top:173px;letter-spacing:-0.2px">Step Size</div>
<div class="t" style="left:364px;top:173px">0.1</div>
<div class="t" style="left:119px;top:208px;letter-spacing:0.37px">Transformation Epsilon</div>
<div class="t" style="left:364px;top:208px;letter-spacing:-0.31px">0.01</div>
<div class="t" style="left:119px;top:243px;letter-spacing:0.48px">Maximum Iterations</div>
<div class="t" style="left:364px;top:243px">30</div>
<div class="t" style="left:119px;top:278px;letter-spacing:-0.19px">Leaf Size</div>
<div class="t" style="left:364px;top:278px">2</div>
<div class="t" style="left:119px;top:313px;letter-spacing:0.02px">Minimum Scan Range</div>
<div class="t" style="left:364px;top:313px">5</div>
<div class="t" style="left:119px;top:348px;letter-spacing:-0.02px">Maximum Scan Range</div>
<div class="t" style="left:364px;top:348px">200</div>
<div class="t" style="left:119px;top:383px;letter-spacing:0.21px">Minimum Add Scan Shift</div>
<div class="t" style="left:364px;top:383px">1</div>
<div class="t" style="left:119px;top:418px;letter-spacing:0.65px">Mode</div>
<div class="t" style="left:365.7px;top:418px;letter-spacing:-1.07px">CPU</div>
<div class="t" style="left:119px;top:453px;letter-spacing:0.43px">Filter Resolution</div>
<div class="t" style="left:364px;top:453px">0.2</div>
<div class="t" style="left:119px;top:488px;letter-spacing:0.08px">Split Range</div>
<div class="t" style="left:364px;top:488px">2000</div>
<div class="t" style="left:119px;top:523px;letter-spacing:0.49px">Origin Longitude</div>
<div class="t" style="left:364px;top:523px;letter-spacing:0.31px">117.9688126</div>
<div class="t" style="left:119px;top:558px;letter-spacing:0.54px">Origin Latitude</div>
<div class="t" style="left:364px;top:558px;letter-spacing:0.24px">24.5931269</div>
<div class="t" style="left:119px;top:593px;letter-spacing:0.51px">Origin Height</div>
<div class="t" style="left:364px;top:593px">33.79</div>
<div class="t" style="left:119px;top:628px;letter-spacing:0.33px">Origin Heading</div>
<div class="t" style="left:364px;top:628px">43.24</div>
<div class="t" style="left:529px;top:124px;letter-spacing:0.18px">Sequence number: 0</div>
<div class="t" style="left:529px;top:141px;letter-spacing:0.31px">Number of scan points: 58978 points.</div>
<div class="t" style="left:529px;top:158px;letter-spacing:0.42px">Number of filtered scan points: 1135 points.</div>
<div class="t" style="left:529px;top:175px;letter-spacing:0.2px">transformed_scan_ptr: 58978 points.</div>
<div class="t" style="left:529px;top:192px;letter-spacing:0.3px">map: 4591480 points.</div>
<div class="t" style="left:529px;top:209px;letter-spacing:-0px">NDT has converged: 1</div>
<div class="t" style="left:529px;top:226px;letter-spacing:0.12px">Fitness score: 0.223674</div>
<div class="t" style="left:529px;top:243px;letter-spacing:0.53px">Number of iteration: 2</div>
<div class="t" style="left:529px;top:260px;letter-spacing:0.34px">(x,y,z,roll,pitch,yaw):</div>
<div class="t" style="left:529px;top:277px;letter-spacing:0.11px">(83.5557, -0.235091, 0.583849, 0.0134594, 0.0195112, -0.0492428)</div>
<div class="t" style="left:529px;top:294px;letter-spacing:0.52px">Transformation Matrix:</div>
<div class="t" style="left:536px;top:311px;letter-spacing:0.42px">0.998598</div>
<div class="t" style="left:606px;top:311px;letter-spacing:0.35px">0.0494807</div>
<div class="t" style="left:687.25px;top:311px;letter-spacing:0.39px">0.018822</div>
<div class="t" style="left:764px;top:311px;letter-spacing:0.4px">83.5557</div>
<div class="t" style="left:529px;top:328px;letter-spacing:0.27px">-0.0492135</div>
<div class="t" style="left:615.25px;top:328px;letter-spacing:0.42px">0.998684</div>
<div class="t" style="left:684.5px;top:328px;letter-spacing:0.32px">-0.014403</div>
<div class="t" style="left:759px;top:328px;letter-spacing:0.23px">-0.235091</div>
<div class="t" style="left:529px;top:345px;letter-spacing:0.27px">-0.0195099</div>
<div class="t" style="left:611.5px;top:345px;letter-spacing:0.45px">0.0134565</div>
<div class="t" style="left:693.5px;top:345px;letter-spacing:0.42px">0.999719</div>
<div class="t" style="left:767px;top:345px;letter-spacing:0.35px">0.583849</div>
<div class="t" style="left:560.25px;top:362px">0</div>
<div class="t" style="left:603.25px;top:362px">0</div>
<div class="t" style="left:646px;top:362px">0</div>
<div class="t" style="left:690.25px;top:362px">1</div>
<div class="t" style="left:529px;top:379px;letter-spacing:0.39px">shift: 0.174657</div>
<div class="t" style="left:1054.6px;top:102px;letter-spacing:-1.43px">GPS</div>
<div class="t" style="left:1054.6px;top:144px;letter-spacing:-0.01px">NDT</div>
<div class="t" style="left:1054.6px;top:184px;letter-spacing:-0.21px">CAL</div>
<div class="t" style="left:1097px;top:106px;letter-spacing:0.5px">83.232</div>
<div class="t" style="left:1149.5px;top:106px;letter-spacing:0.41px">-0.220</div>
<div class="t" style="left:1202px;top:106px;letter-spacing:0.48px">0.860</div>
<div class="t" style="left:1246.5px;top:106px;letter-spacing:0.26px">-0.045</div>
<div class="t" style="left:1097px;top:146px;letter-spacing:0.5px">83.382</div>
<div class="t" style="left:1149.5px;top:146px;letter-spacing:0.41px">-0.220</div>
<div class="t" style="left:1202px;top:146px;letter-spacing:0.48px">0.588</div>
<div class="t" style="left:1246.5px;top:146px;letter-spacing:0.26px">-0.049</div>
<div class="t" style="left:1097px;top:186px;letter-spacing:0.5px">83.382</div>
<div class="t" style="left:1149.5px;top:186px;letter-spacing:0.41px">-0.220</div>
<div class="t" style="left:1202px;top:186px;letter-spacing:0.48px">0.588</div>
<div class="t" style="left:1246.5px;top:186px;letter-spacing:0.26px">-0.049</div>
<div class="t" style="left:1099.5px;top:347px;letter-spacing:0.62px">Rotation:</div>
<div class="t" style="left:1099.5px;top:364px;letter-spacing:0.13px">1 0 0</div>
<div class="t" style="left:1099.5px;top:381px;letter-spacing:0.13px">0 1 0</div>
<div class="t" style="left:1099.5px;top:398px;letter-spacing:0.13px">0 0 1</div>
<div class="t" style="left:1099.5px;top:415px;letter-spacing:0.28px">roll:0 pitch:-0 yaw:0</div>
<div class="t" style="left:1464.3px;top:109px;letter-spacing:0.11px">Scale View</div>
<div class="t" style="left:1464.6px;top:199px;letter-spacing:0.03px">Cor Yaw:</div>
<div class="t" style="left:1568.3px;top:199px;letter-spacing:-0.08px">1.75</div>
<div class="t" style="left:1664.6px;top:199px;letter-spacing:0.12px">Cor Pitch:</div>
<div class="t" style="left:1768.3px;top:199px">0</div>
<div class="t" style="left:1464.6px;top:249px;letter-spacing:0.07px">Cor Roll:</div>
<div class="t" style="left:1568.3px;top:249px">0</div>
<div class="t" style="left:1784.2px;top:249px;letter-spacing:0.19px">Set Cor</div>
<div class="t" style="left:1465px;top:349px;letter-spacing:0.45px">Arm x:</div>
<div class="t" style="left:1568.3px;top:349px">0</div>
<div class="t" style="left:1665px;top:349px;letter-spacing:0.45px">Arm y:</div>
<div class="t" style="left:1768.3px;top:349px">0</div>
<div class="t" style="left:1465px;top:399px;letter-spacing:-0.29px">Arm is LIDAR TO GPS:</div>
<div class="t" style="left:1781.9px;top:399px;letter-spacing:0.34px">Set Arm</div>
<div class="t" style="left:169.5px;top:663px;letter-spacing:0px">Change Param</div>
<div class="t" style="left:394.5px;top:663px;letter-spacing:0.96px">Split</div>
<div class="t" style="left:152.5px;top:56px;letter-spacing:0.33px">Load</div>
<div class="t" style="left:433.2px;top:56px;letter-spacing:-0.4px">Save</div>
<div class="t" style="left:666px;top:56px;letter-spacing:0.58px">Conitinue</div>
<div class="t" style="left:901.62px;top:56px;letter-spacing:0.11px">Set Skip</div>
<div class="t" style="left:1009.5px;top:56px;letter-spacing:0.33px">Reset</div>
<div class="t" style="left:1146.5px;top:56px;letter-spacing:-0.23px">Use</div>
<div class="t" style="left:1251.15px;top:56px;letter-spacing:0.32px">Clear</div>
<div class="t" style="left:1360.25px;top:56px;letter-spacing:-0.07px">Calc</div>
</body></html>
